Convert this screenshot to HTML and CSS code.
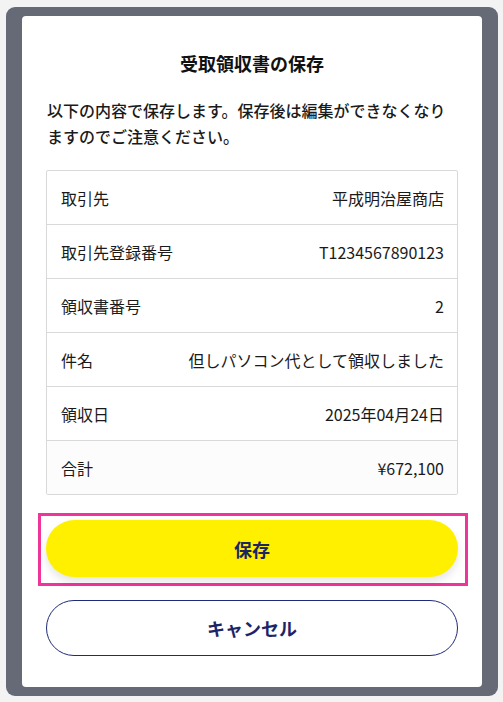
FILE: index.html
```html
<!DOCTYPE html>
<html lang="ja">
<head>
<meta charset="utf-8">
<title>受取領収書の保存</title>
<link rel="stylesheet" href="styles.css">
</head>
<body>
<div class="backdrop">
  <div class="modal">
    <h1 class="title">受取領収書の保存</h1>
    <p class="lead">以下の内容で保存します。保存後は編集ができなくなりますのでご注意ください。</p>
    <div class="table">
      <div class="row"><span class="label">取引先</span><span class="value">平成明治屋商店</span></div>
      <div class="row"><span class="label">取引先登録番号</span><span class="value">T1234567890123</span></div>
      <div class="row"><span class="label">領収書番号</span><span class="value">2</span></div>
      <div class="row"><span class="label">件名</span><span class="value">但しパソコン代として領収しました</span></div>
      <div class="row"><span class="label">領収日</span><span class="value">2025年04月24日</span></div>
      <div class="row row-total"><span class="label">合計</span><span class="value">¥672,100</span></div>
    </div>
    <div class="highlight">
      <button class="btn btn-save">保存</button>
    </div>
    <button class="btn btn-cancel">キャンセル</button>
  </div>
</div>
</body>
</html>
```
FILE: styles.css
```css
* { box-sizing: border-box; }
html, body { margin: 0; padding: 0; }
body {
  background: #f3f3f3;
  font-family: "Noto Sans CJK JP", "Noto Sans", sans-serif;
  width: 503px;
  height: 702px;
  overflow: hidden;
}
.backdrop {
  margin: 7px 5px 0 6px;
  height: 689px;
  background: #666a77;
  border-radius: 9px;
  padding: 9px 16px 0 16px;
}
.modal {
  background: #ffffff;
  width: 460px;
  height: 671px;
  border-radius: 4px;
  padding: 34px 24px 0 24px;
  display: flex;
  flex-direction: column;
}
.title {
  margin: 0;
  text-align: center;
  font-size: 18px;
  line-height: 26px;
  font-weight: 700;
  color: #111;
}
.lead {
  margin: 21px 0 0 1px;
  font-size: 16px;
  line-height: 26px;
  font-weight: 500;
  color: #1a1a1a;
}
.table {
  margin-top: 21px;
  border: 1px solid #d9d9d9;
  border-radius: 2px;
}
.row {
  display: flex;
  justify-content: space-between;
  align-items: center;
  height: 54px;
  padding: 0 13px 0 14px;
  border-top: 1px solid #d9d9d9;
  font-size: 16px;
  color: #1a1a1a;
}
.row:first-child { border-top: none; height: 53px; }
.row-total { background: #fcfcfc; height: 54px; }
.highlight {
  margin: 18px -10px 0 -8px;
  border: 3px solid #f0359a;
  padding: 4px 7px 6px 5px;
}
.btn {
  display: block;
  width: 412px;
  height: 57px;
  border-radius: 29px;
  font-family: "Noto Sans CJK JP", "Noto Sans", sans-serif;
  font-size: 18px;
  font-weight: 700;
  color: #1c2566;
  cursor: pointer;
}
.btn-save {
  background: #fff000;
  border: none;
  box-shadow: 0 5px 8px rgba(0, 0, 0, 0.1);
}
.btn-cancel {
  margin-top: 14px;
  height: 56px;
  background: #ffffff;
  border: 1px solid #1f2a78;
}
```
